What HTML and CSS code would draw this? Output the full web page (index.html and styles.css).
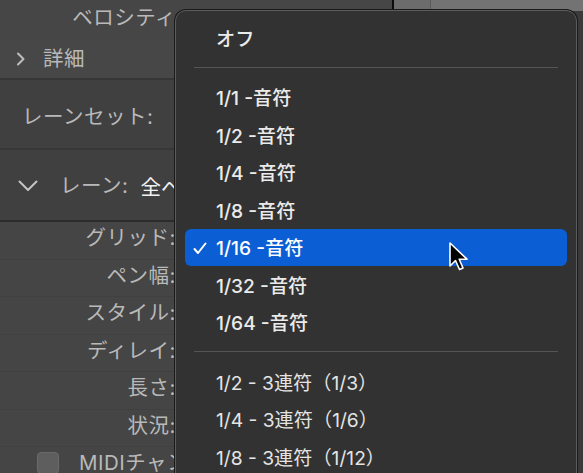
FILE: index.html
```html
<!DOCTYPE html>
<html lang="ja">
<head>
    <meta charset="UTF-8">
    <title>グリッド</title>
    <link rel="stylesheet" href="styles.css">
</head>
<body>
    <div class="screen">
        <div class="inspector">
            <div class="row row-top"><span class="label right">ベロシティ</span></div>
            <div class="row row-detail">
                <span class="chev">
                    <svg width="10" height="14" viewBox="0 0 10 14"><path d="M2 1.5 L7.5 7 L2 12.5" fill="none" stroke="#bdbdbd" stroke-width="2" stroke-linecap="round" stroke-linejoin="round"/></svg>
                </span>
                <span class="label">詳細</span>
            </div>
            <div class="section"><span class="label">レーンセット:</span></div>
            <div class="section section-lane">
                <span class="chev down">
                    <svg width="20" height="12" viewBox="0 0 20 12"><path d="M1.5 1.5 L10 10 L18.5 1.5" fill="none" stroke="#c4c4c4" stroke-width="2" stroke-linecap="round" stroke-linejoin="round"/></svg>
                </span>
                <span class="label">レーン:</span>
                <span class="value">全ペ</span>
            </div>
            <div class="params">
                <div class="param"><span class="label right">グリッド:</span></div>
                <div class="param"><span class="label right">ペン幅:</span></div>
                <div class="param"><span class="label right">スタイル:</span></div>
                <div class="param"><span class="label right">ディレイ:</span></div>
                <div class="param"><span class="label right">長さ:</span></div>
                <div class="param"><span class="label right">状況:</span></div>
                <div class="param param-check"><span class="checkbox"></span><span class="label">MIDIチャンネル</span></div>
            </div>
        </div>
        <div class="tracks">
            <div class="track-head"></div>
        </div>

        <div class="menu">
            <div class="item">オフ</div>
            <div class="sep"></div>
            <div class="item">1/1 -音符</div>
            <div class="item">1/2 -音符</div>
            <div class="item">1/4 -音符</div>
            <div class="item">1/8 -音符</div>
            <div class="item selected">
                <svg class="check" width="14" height="13" viewBox="0 0 14 13"><path d="M1.5 7 L5 11 L12.5 1.5" fill="none" stroke="#fff" stroke-width="2" stroke-linecap="round" stroke-linejoin="round"/></svg>
                1/16 -音符
            </div>
            <div class="item">1/32 -音符</div>
            <div class="item">1/64 -音符</div>
            <div class="sep"></div>
            <div class="item light">1/2 - 3連符（1/3）</div>
            <div class="item light">1/4 - 3連符（1/6）</div>
            <div class="item light">1/8 - 3連符（1/12）</div>
        </div>

        <svg class="cursor" width="22" height="32" viewBox="0 0 22 32">
            <path d="M2 1 L2 24 L7.5 18.5 L11.5 27.5 L15 26 L11.2 17.2 L19 17.2 Z" fill="#000" stroke="#fff" stroke-width="1.6" stroke-linejoin="round"/>
        </svg>
    </div>
</body>
</html>
```

FILE: styles.css
```css
body {
    margin: 0;
    background-color: #3c3c3c;
    font-family: Inter, "Noto Sans CJK JP", sans-serif;
    overflow: hidden;
}

.screen {
    position: relative;
    width: 583px;
    height: 473px;
    display: flex;
}

.inspector {
    width: 392px;
    display: flex;
    flex-direction: column;
    background-color: #424242;
}

.inspector > div {
    flex-shrink: 0;
}

.label {
    color: #b9b9b9;
    font-size: 20.5px;
    letter-spacing: 0.5px;
    line-height: 1;
    white-space: nowrap;
}

.right {
    width: 176px;
    text-align: right;
}

.row {
    height: 40px;
    display: flex;
    align-items: center;
    box-sizing: border-box;
}

.row-top {
    background-color: #464646;
    padding-bottom: 3px;
}

.row-detail {
    background-color: #474747;
    padding-left: 16px;
    border-bottom: 2px solid #363636;
}

.chev {
    width: 27px;
    display: flex;
}

.section {
    height: 70px;
    display: flex;
    align-items: center;
    padding-left: 22px;
    padding-top: 6px;
    box-sizing: border-box;
    background-color: #404040;
    border-bottom: 2px solid #373737;
}

.section-lane {
    height: 72px;
    padding-left: 18px;
    padding-top: 2px;
    border-bottom: 2px solid #2c2c2c;
}

.chev.down {
    width: 42px;
}

.value {
    color: #f2f2f2;
    font-size: 20.5px;
    margin-left: 12px;
}

.params {
    display: flex;
    flex-direction: column;
}

.param {
    height: 37.5px;
    display: flex;
    align-items: center;
    padding-bottom: 4px;
    box-sizing: border-box;
    background-color: #454545;
    border-bottom: 1px solid #404040;
}

.param-check {
    padding-left: 37px;
}

.checkbox {
    width: 22px;
    height: 22px;
    border-radius: 4px;
    background-color: #5e5e5e;
    border: 1px solid #6a6a6a;
    box-sizing: border-box;
    margin-right: 20px;
}

.tracks {
    flex: 1;
    border-left: 2px solid #0c0c0c;
    background-color: #3a3a3a;
}

.track-head {
    height: 11px;
    background: linear-gradient(to right, #6c6c6c 0, #6c6c6c 36px, #5a5a5a 36px, #5a5a5a 37px, #737373 37px);
}

.menu {
    position: absolute;
    left: 175px;
    top: 10px;
    width: 402px;
    height: 480px;
    box-sizing: border-box;
    padding: 8px 9px 10px;
    background-color: #323232;
    border: 1px solid #5c5c5c;
    border-radius: 11px;
    box-shadow: 0 0 0 1px #1a1a1a;
}

.item {
    position: relative;
    height: 37.5px;
    display: flex;
    align-items: center;
    padding-left: 31px;
    color: #ebebeb;
    font-size: 19.2px;
    font-weight: 500;
    border-radius: 6px;
    white-space: nowrap;
}

.item.light {
    font-weight: 400;
    color: #e4e4e4;
}

.item.selected {
    background-color: #0b5ed4;
    color: #ffffff;
}

.check {
    position: absolute;
    left: 8px;
    top: 13px;
}

.sep {
    height: 22px;
    box-sizing: border-box;
    margin: 0 9px;
    border-top: 10px solid transparent;
    border-bottom: 11px solid transparent;
    background-color: #555555;
    background-clip: content-box;
}

.cursor {
    position: absolute;
    left: 448px;
    top: 242px;
}
```
